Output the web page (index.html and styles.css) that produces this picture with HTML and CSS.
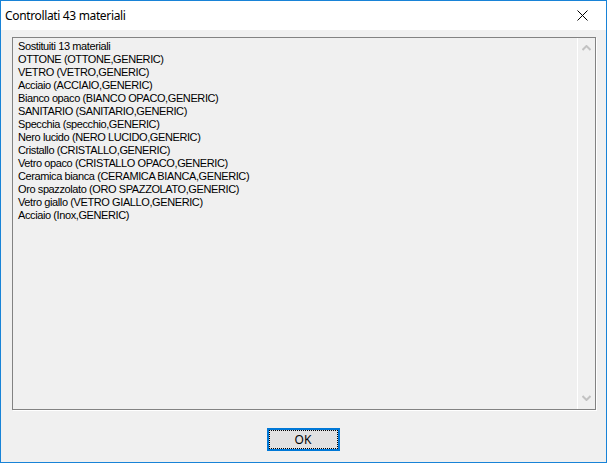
FILE: index.html
```html
<!DOCTYPE html>
<html>
<head>
	<meta charset="utf-8">
	<title>Controllati 43 materiali</title>
	<link rel="stylesheet" href="styles.css">
</head>
<body>
  <div class="window">
    <div class="titlebar">
      <span class="title">Controllati 43 materiali</span>
      <span class="close">
        <svg width="11" height="11" viewBox="0 0 11 11"><path d="M0.5 0.5 L10.5 10.5 M10.5 0.5 L0.5 10.5" stroke="#000" stroke-width="1" fill="none"/></svg>
      </span>
    </div>

    <div class="content">
      <div class="textbox">
        <div class="lines">
          <div>Sostituiti 13 materiali</div>
          <div>OTTONE (OTTONE,GENERIC)</div>
          <div>VETRO (VETRO,GENERIC)</div>
          <div>Acciaio (ACCIAIO,GENERIC)</div>
          <div>Bianco opaco (BIANCO OPACO,GENERIC)</div>
          <div>SANITARIO (SANITARIO,GENERIC)</div>
          <div>Specchia (specchio,GENERIC)</div>
          <div>Nero lucido (NERO LUCIDO,GENERIC)</div>
          <div>Cristallo (CRISTALLO,GENERIC)</div>
          <div>Vetro opaco (CRISTALLO OPACO,GENERIC)</div>
          <div>Ceramica bianca (CERAMICA BIANCA,GENERIC)</div>
          <div>Oro spazzolato (ORO SPAZZOLATO,GENERIC)</div>
          <div>Vetro giallo (VETRO GIALLO,GENERIC)</div>
          <div>Acciaio (Inox,GENERIC)</div>
        </div>
        <!-- disabled scrollbar, nothing to scroll -->
        <div class="scrollbar">
          <svg width="9" height="6" viewBox="0 0 9 6"><path d="M0.5 5 L4.5 1 L8.5 5" stroke="#c2c2c2" stroke-width="2" fill="none"/></svg>
          <svg width="9" height="6" viewBox="0 0 9 6"><path d="M0.5 1 L4.5 5 L8.5 1" stroke="#c2c2c2" stroke-width="2" fill="none"/></svg>
        </div>
      </div>

      <div class="buttons">
        <button class="ok">OK</button>
      </div>
    </div>
  </div>
</body>
</html>
```

FILE: styles.css
```css
body {
	margin: 0;
	background-color: #f0f0f0;
}

.window {
	width: 607px;
	height: 463px;
	box-sizing: border-box;
	border: 1px solid #1883d7;
	background-color: #f0f0f0;
	display: flex;
	flex-direction: column;
}

.titlebar {
	height: 29px;
	background-color: #fff;
	display: flex;
	align-items: center;
	justify-content: space-between;
	padding-left: 4px;
	font-family: 'Noto Sans', sans-serif;
	font-size: 12px;
	letter-spacing: -0.35px;
	color: #000;
}

.close {
	width: 46px;
	height: 29px;
	display: flex;
	align-items: center;
	justify-content: center;
	margin-right: 1px;
}

.content {
	flex: 1;
	padding: 7px 10px 0 11px;
	display: flex;
	flex-direction: column;
}

.textbox {
	height: 373px;
	box-sizing: border-box;
	border: 1px solid #828282;
	box-shadow: 1px 1px 0 #fff;
	display: flex;
}

.lines {
	flex: 1;
	padding: 2px 5px;
	font-family: 'Liberation Sans', Arial, sans-serif;
	font-size: 11px;
	letter-spacing: -0.4px;
	line-height: 13px;
	color: #000;
}

.scrollbar {
	width: 17px;
	border-left: 1px solid #fff;
	display: flex;
	flex-direction: column;
	justify-content: space-between;
	align-items: center;
	padding: 7px 0 8px;
}

.buttons {
	display: flex;
	justify-content: center;
	margin-top: 18px;
}

.ok {
	width: 73px;
	height: 23px;
	box-sizing: border-box;
	background-color: #e1e1e1;
	border: 2px solid #0078d7;
	outline: 1px dotted #000;
	outline-offset: -3px;
	font-family: 'Noto Sans', sans-serif;
	font-size: 12px;
	color: #000;
	padding: 0;
	margin-right: 2px;
}
```
